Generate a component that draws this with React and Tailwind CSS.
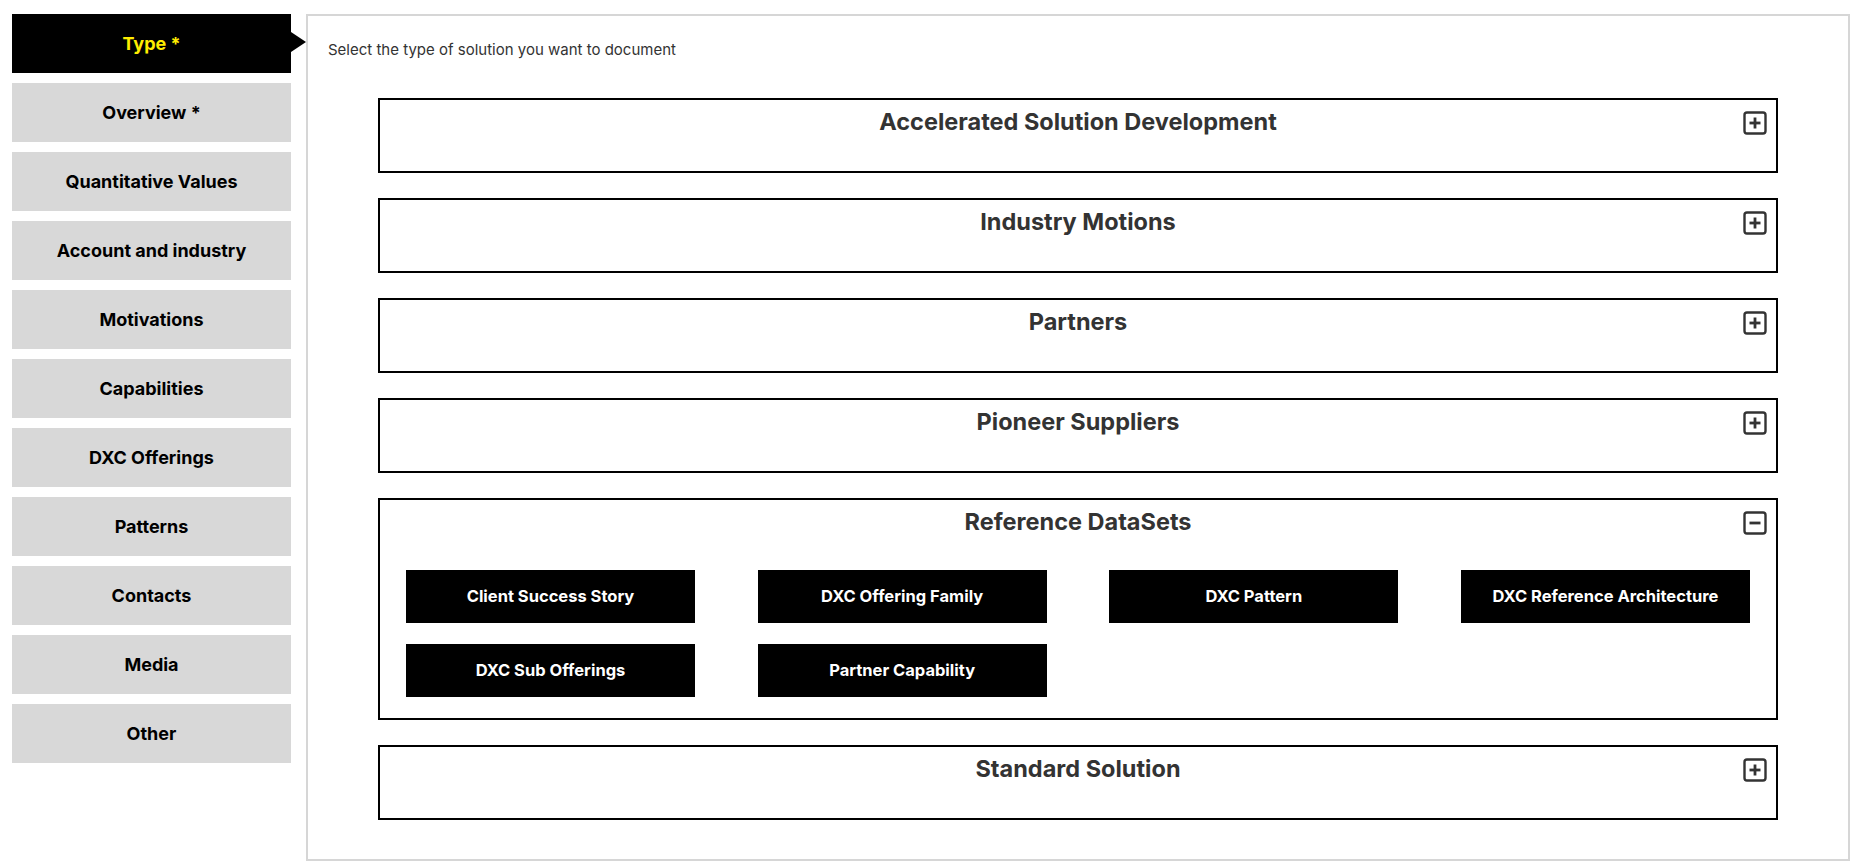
const tabs = [
  "Type *",
  "Overview *",
  "Quantitative Values",
  "Account and industry",
  "Motivations",
  "Capabilities",
  "DXC Offerings",
  "Patterns",
  "Contacts",
  "Media",
  "Other",
];

const sections = [
  { title: "Accelerated Solution Development" },
  { title: "Industry Motions" },
  { title: "Partners" },
  { title: "Pioneer Suppliers" },
  {
    title: "Reference DataSets",
    open: true,
    items: [
      "Client Success Story",
      "DXC Offering Family",
      "DXC Pattern",
      "DXC Reference Architecture",
      "DXC Sub Offerings",
      "Partner Capability",
    ],
  },
  { title: "Standard Solution" },
];

function ToggleIcon({ open }) {
  return (
    <svg width="24" height="24" viewBox="0 0 24 24" fill="none">
      <rect x="1.5" y="1.5" width="21" height="21" rx="2.5" stroke="#333" strokeWidth="2.4" />
      <path d="M6.5 12h11" stroke="#333" strokeWidth="2.8" />
      {!open && <path d="M12 6.5v11" stroke="#333" strokeWidth="2.8" />}
    </svg>
  );
}

function Section({ section }) {
  return (
    <div
      className={`relative border-2 border-black bg-white ${section.open ? "pb-[21px]" : "h-[75px]"}`}
    >
      <h3 className="pt-[7px] text-center text-[23.5px] font-bold leading-[30px] text-[#333]">
        {section.title}
      </h3>
      <div className="absolute right-[9px] top-[11px]">
        <ToggleIcon open={section.open} />
      </div>
      {section.open && (
        <div className="mt-[33px] grid grid-cols-[repeat(4,289px)] justify-between gap-y-[21px] px-[26px]">
          {section.items.map((item) => (
            <button
              key={item}
              className="flex h-[53px] items-center justify-center bg-black text-[16.5px] font-bold text-white"
            >
              {item}
            </button>
          ))}
        </div>
      )}
    </div>
  );
}

export default function App() {
  return (
    <div className="flex min-h-screen bg-white pl-[12px] pt-[14px] font-['Inter',sans-serif]">
      <nav className="flex w-[279px] shrink-0 flex-col gap-[10px]">
        {tabs.map((tab, index) => (
          <div
            key={tab}
            className={`relative flex h-[59px] items-center justify-center text-[18px] font-bold ${
              index === 0 ? "bg-black text-[#ffed00]" : "bg-[#d8d8d8] text-black"
            }`}
          >
            {tab}
            {index === 0 && (
              <span className="absolute right-[-15px] top-[18px] h-0 w-0 border-y-[10px] border-l-[15px] border-y-transparent border-l-black" />
            )}
          </div>
        ))}
      </nav>

      <main className="ml-[15px] h-[847px] w-[1544px] border-2 border-[#d6d6d6]">
        <p className="pl-[20px] pt-[24px] text-[15px] leading-[20px] text-[#333]">
          Select the type of solution you want to document
        </p>
        <div className="mx-[70px] mt-[38px] flex flex-col gap-[25px]">
          {sections.map((section) => (
            <Section key={section.title} section={section} />
          ))}
        </div>
      </main>
    </div>
  );
}
